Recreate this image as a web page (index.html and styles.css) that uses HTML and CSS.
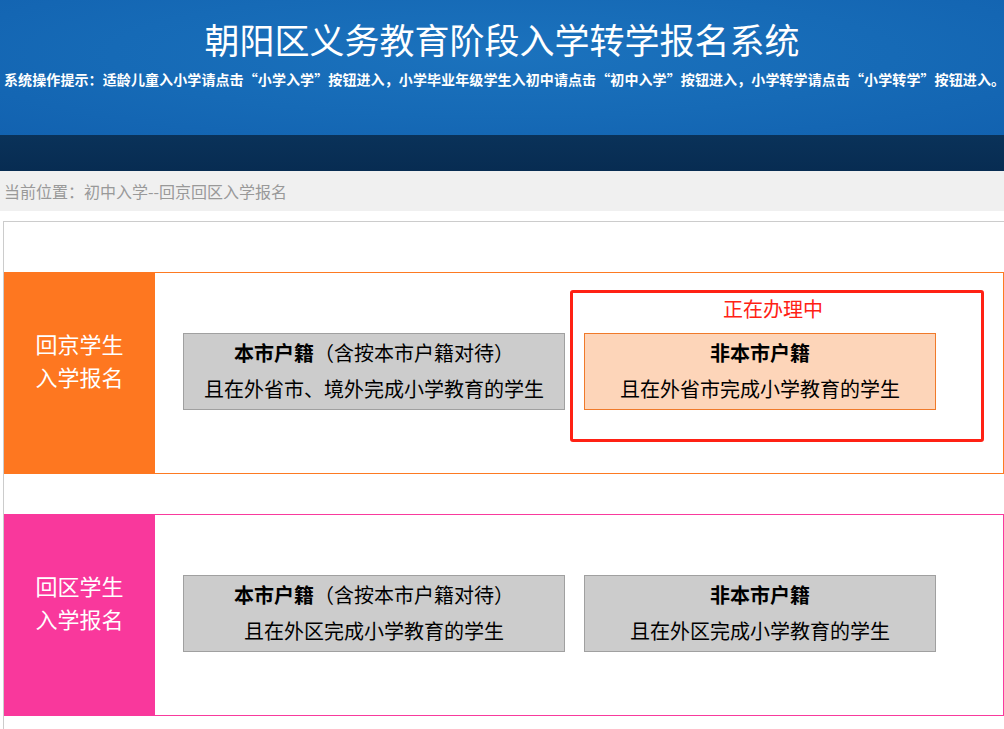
FILE: index.html
```html
<!DOCTYPE html>
<html>
	<head>
		<meta charset="utf-8">
		<title>朝阳区义务教育阶段入学转学报名系统</title>
		<link rel="stylesheet" href="styles.css">
	</head>
	<body>
		<!-- 头部 -->
		<div class="header">
			<div class="header-main">
				<h1 class="title">朝阳区义务教育阶段入学转学报名系统</h1>
				<p class="tips">系统操作提示：适龄儿童入小学请点击“小学入学”按钮进入，小学毕业年级学生入初中请点击“初中入学”按钮进入，小学转学请点击“小学转学”按钮进入。</p>
			</div>
			<div class="header-bar"></div>
		</div>

		<!-- 当前位置 -->
		<div class="crumb">当前位置：初中入学--回京回区入学报名</div>

		<div class="content">
			<!-- 回京 -->
			<div class="section section-orange">
				<div class="section-name">回京学生<br>入学报名</div>
				<div class="section-body">
					<div class="item-plain">
						<a class="choice" href="#">
							<div><b>本市户籍</b>（含按本市户籍对待）</div>
							<div>且在外省市、境外完成小学教育的学生</div>
						</a>
					</div>
					<div class="item-wrap active">
						<div class="status">正在办理中</div>
						<a class="choice choice-on" href="#">
							<div><b>非本市户籍</b></div>
							<div>且在外省市完成小学教育的学生</div>
						</a>
					</div>
				</div>
			</div>

			<!-- 回区 -->
			<div class="section section-pink">
				<div class="section-name">回区学生<br>入学报名</div>
				<div class="section-body">
					<div class="item-plain">
						<a class="choice" href="#">
							<div><b>本市户籍</b>（含按本市户籍对待）</div>
							<div>且在外区完成小学教育的学生</div>
						</a>
					</div>
					<div class="item-wrap">
						<div class="status"></div>
						<a class="choice" href="#">
							<div><b>非本市户籍</b></div>
							<div>且在外区完成小学教育的学生</div>
						</a>
					</div>
				</div>
			</div>
		</div>
	</body>
</html>
```

FILE: styles.css
```css
/* 通用 */
* {
	margin: 0;
	padding: 0;
	box-sizing: border-box;
}

html, body {
	overflow-x: hidden;
}

body {
	font-family: "Microsoft YaHei", "Noto Sans CJK SC", sans-serif;
	background-color: #fff;
	color: #000;
}

a {
	color: inherit;
	text-decoration: none;
}

/* 头部 */
.header-main {
	height: 135px;
	background: radial-gradient(ellipse at 50% 40%, #1b72bd 0%, #166ab6 55%, #1262b0 100%);
	color: #fff;
	overflow: hidden;
}

.title {
	padding-top: 17px;
	font-size: 35px;
	font-weight: normal;
	line-height: 44px;
	text-align: center;
}

.tips {
	margin-top: 10px;
	padding-left: 4px;
	font-size: 14px;
	line-height: 16px;
	font-weight: bold;
	letter-spacing: 0.1px;
	white-space: nowrap;
}

.header-bar {
	height: 36px;
	background: linear-gradient(#0a3259, #072c52);
}

/* 当前位置 */
.crumb {
	height: 40px;
	padding-left: 4px;
	background-color: #f0f0f0;
	color: #999;
	font-size: 16px;
	line-height: 40px;
}

/* 内容区 */
.content {
	width: 1002px;
	margin: 10px 0 0 3px;
	padding: 50px 0 40px;
	border: 1px solid #ccc;
}

.section {
	display: flex;
	height: 202px;
	border: 1px solid;
}

.section + .section {
	margin-top: 40px;
}

.section-orange {
	border-color: #fd7a22;
}

.section-pink {
	border-color: #f93a9d;
}

.section-name {
	width: 151px;
	margin: -1px 0 -1px -1px;
	padding-bottom: 26px;
	display: flex;
	align-items: center;
	justify-content: center;
	color: #fff;
	font-size: 22px;
	line-height: 33px;
	text-align: center;
}

.section-orange .section-name {
	background-color: #fe7720;
}

.section-pink .section-name {
	background-color: #f9389c;
}

.section-body {
	flex: 1;
	display: flex;
	align-items: flex-start;
	padding-top: 17px;
}

.item-plain {
	margin: 43px 0 0 28px;
}

.item-wrap {
	margin-left: 5px;
	padding: 4px 45px 29px 11px;
	border: 3px solid transparent;
	border-radius: 3px;
}

.item-wrap.active {
	border-color: #ff2114;
}

.status {
	height: 24px;
	margin: 0 -26px 12px 0;
	color: #ff2114;
	font-size: 20px;
	line-height: 24px;
	text-align: center;
}

/* 选择按钮 */
.choice {
	display: block;
	padding: 1px 0 2px;
	background-color: #ccc;
	border: 1px solid #a0a0a0;
	font-size: 20px;
	line-height: 36px;
	text-align: center;
}

.item-plain .choice {
	width: 382px;
}

.item-wrap .choice {
	width: 352px;
}

.choice-on {
	background-color: #fdd5b9;
	border-color: #f07a2a;
}
```
